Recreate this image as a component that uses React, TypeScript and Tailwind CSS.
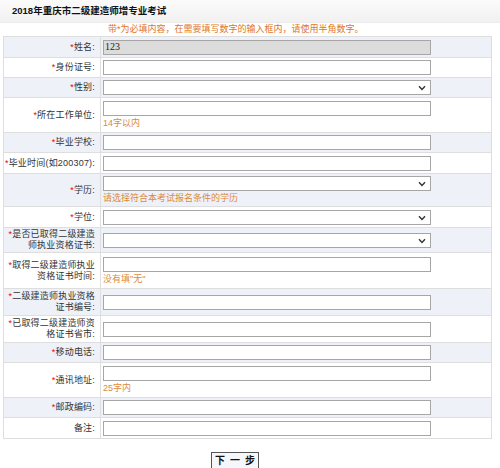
import React from "react";

type Row = {
  label: string[];
  req?: boolean;
  kind: "input" | "select";
  value?: string;
  note?: string;
  h: string;
  disabled?: boolean;
};

const rows: Row[] = [
  { label: ["姓名:"], req: true, kind: "input", value: "123", h: "h-[21px]", disabled: true },
  { label: ["身份证号:"], req: true, kind: "input", h: "h-[20px]" },
  { label: ["性别:"], req: true, kind: "select", h: "h-[20px]" },
  { label: ["所在工作单位:"], req: true, kind: "input", note: "14字以内", h: "h-[35px]" },
  { label: ["毕业学校:"], req: true, kind: "input", h: "h-[20px]" },
  { label: ["毕业时间(如200307):"], req: true, kind: "input", h: "h-[21px]" },
  { label: ["学历:"], req: true, kind: "select", note: "请选择符合本考试报名条件的学历", h: "h-[33px]" },
  { label: ["学位:"], req: true, kind: "select", h: "h-[21px]" },
  { label: ["是否已取得二级建造", "师执业资格证书:"], req: true, kind: "select", h: "h-[25px]" },
  { label: ["取得二级建造师执业", "资格证书时间:"], req: true, kind: "input", note: "没有填\"无\"", h: "h-[36px]" },
  { label: ["二级建造师执业资格", "证书编号:"], req: true, kind: "input", h: "h-[27px]" },
  { label: ["已取得二级建造师资", "格证书省市:"], req: true, kind: "input", h: "h-[27px]" },
  { label: ["移动电话:"], req: true, kind: "input", h: "h-[20px]" },
  { label: ["通讯地址:"], req: true, kind: "input", note: "25字内", h: "h-[35px]" },
  { label: ["邮政编码:"], req: true, kind: "input", h: "h-[20px]" },
  { label: ["备注:"], kind: "input", h: "h-[20px]" },
];

function Field({ row }: { row: Row }) {
  if (row.kind === "select") {
    return (
      <div className="relative h-[15px] w-[328px] border border-[#a6a6a6] bg-white">
        <svg
          className="absolute right-[4px] top-[4px]"
          width="8"
          height="6"
          viewBox="0 0 8 6"
          fill="none"
        >
          <path d="M1 1.2 L4 4.4 L7 1.2" stroke="#333" strokeWidth="1.4" />
        </svg>
      </div>
    );
  }
  return (
    <div
      className={`flex h-[15px] w-[328px] items-center border border-[#a6a6a6] pl-[1px] text-[10px] leading-none text-[#222] [font-family:'Liberation_Serif',serif] ${
        row.disabled ? "bg-[#dcdcdc]" : "bg-white"
      }`}
    >
      {row.value}
    </div>
  );
}

export default function App() {
  return (
    <div className="h-[468px] w-[500px] overflow-hidden bg-white text-[9px] text-[#333] [font-family:'Liberation_Sans','Noto_Sans_CJK_SC',sans-serif]">
      <div className="flex h-[23px] items-center border-b border-[#ececec] bg-gradient-to-b from-[#fbfbfb] to-[#f1f1f1] pl-[12px] text-[9.5px] font-bold text-[#111]">
        2018年重庆市二级建造师增专业考试
      </div>
      <div className="flex h-[13px] items-center pl-[108px] text-[#e0761e]">
        带*为必填内容，在需要填写数字的输入框内，请使用半角数字。
      </div>

      <div className="ml-[3px] w-[489px] border border-[#dedede]">
        {rows.map((row, i) => (
          <div
            key={i}
            className={`flex border-b border-[#dedede] last:border-b-0 ${row.h} ${
              i % 2 === 0 ? "bg-[#eef1f8]" : "bg-white"
            }`}
          >
            <div className="flex w-[97px] shrink-0 flex-col items-end justify-center border-r border-[#dedede] pr-[5px] text-right leading-[11px] whitespace-nowrap tracking-[0.2px]">
              {row.label.map((l, j) => (
                <span key={j}>
                  {j === 0 && row.req && <span className="text-[#e00]">*</span>}
                  {l}
                </span>
              ))}
            </div>
            <div className="flex flex-col justify-center gap-[2px] pl-[2px]">
              <Field row={row} />
              {row.note && (
                <span className="leading-[11px] text-[#dc8a3a]">{row.note}</span>
              )}
            </div>
          </div>
        ))}
      </div>

      <div className="ml-[211px] mt-[13px]">
        <button className="flex h-[20px] w-[48px] items-start justify-center gap-[5px] border border-[#555] bg-[#f5f7fb] pt-[3px] text-[10px] font-bold leading-none text-[#111]">
          <span>下</span>
          <span>一</span>
          <span>步</span>
        </button>
      </div>
    </div>
  );
}
